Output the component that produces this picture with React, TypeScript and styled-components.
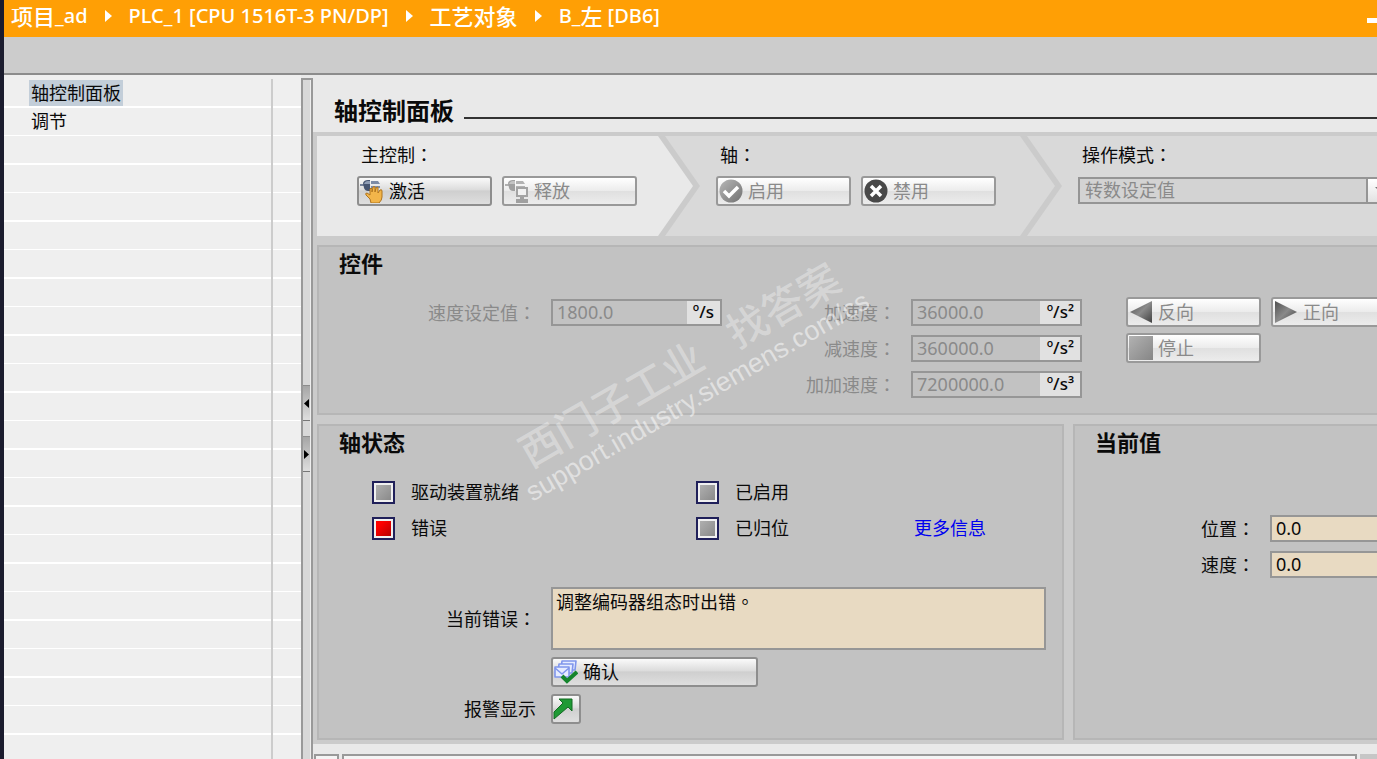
import React from "react";
import styled, { createGlobalStyle } from "styled-components";

const Global = createGlobalStyle`
  * { box-sizing: border-box; }
  html, body, #root { height: 100%; }
  body {
    margin: 0;
    overflow: hidden;
    background: #e9e9e9;
    color: #0a0a0a;
    font: 18px/24px "Noto Sans", "Noto Sans CJK SC", sans-serif;
  }
  button, input, select, textarea { font: inherit; color: inherit; }
  h1, h2, p, ul, ol { margin: 0; padding: 0; list-style: none; }
`;

const Window = styled.div`
  position: relative;
  display: flex;
  flex-direction: column;
  height: 100vh;
  min-height: 759px;
  overflow: hidden;
  border-left: 4px solid #1b1c2e;
`;

const TitleBar = styled.header`
  display: flex;
  flex: none;
  align-items: center;
  height: 37px;
  padding: 0 0 6px 7px;
  background: #ff9f05;
  color: #fff;
  font-size: 20px;
  font-weight: 500;
`;

const Crumbs = styled.ol`
  display: flex;
  flex: 1;
  align-items: center;
  white-space: nowrap;
`;

const Crumb = styled.li`
  display: flex;
  align-items: center;
`;

const Han = styled.span`
  font-size: 22px;
`;

const CrumbArrow = styled.svg`
  width: 7px;
  height: 14px;
  margin: 0 17px;
  fill: #fff;
`;

const Minimize = styled.button`
  width: 12px;
  height: 5px;
  margin: 10px -2px 0 0;
  padding: 0;
  border: 0;
  background: #fff;
`;

const Toolbar = styled.div`
  flex: none;
  height: 38px;
  border-bottom: 2px solid #8c8c8c;
  background: #ccc;
`;

const Body = styled.div`
  display: flex;
  flex: 1;
  min-height: 0;
`;

const Sidebar = styled.nav`
  display: flex;
  flex: none;
  width: 297px;
  padding-top: 4px;
  background: #efefef;
`;

const TreeRows = styled.ul`
  flex: 1;
  padding-left: 25px;
  background: repeating-linear-gradient(
    #efefef 0 27px, #fff 27px 29px, #efefef 29px 56px, #fff 56px 57px
  );
`;

const TreeItem = styled.li`
  height: 28px;
  padding-top: 1px;
`;

const TreeLink = styled.a<{ $active?: boolean }>`
  display: inline-block;
  height: 26px;
  padding: 0 2px;
  line-height: 26px;
  color: #0a0a0a;
  text-decoration: none;
  background: ${(p) => (p.$active ? "#c3ced9" : "transparent")};
`;

const TreeGutter = styled.div`
  width: 30px;
  border-left: 2px solid #ccc;
  background: repeating-linear-gradient(
    #efefef 0 27px, #fff 27px 29px, #efefef 29px 56px, #fff 56px 57px
  );
`;

const Splitter = styled.div`
  display: flex;
  flex: none;
  flex-direction: column;
  align-items: flex-start;
  gap: 15px;
  width: 12px;
  margin-top: 3px;
  padding-top: 305px;
  border: 2px solid #999;
  border-bottom: 0;
  background: linear-gradient(to right, #d8d8d8 0 7px, #eee 7px);
`;

const SplitterButton = styled.button`
  display: flex;
  align-items: center;
  justify-content: center;
  width: 7px;
  height: 36px;
  padding: 0;
  border: 0;
  border-top: 1px solid #8c8c8c;
  border-bottom: 1px solid #777;
  background: linear-gradient(#a6a6a6, #dedede);

  svg { width: 5px; height: 9px; flex: none; }
`;

const Main = styled.main`
  display: flex;
  flex: 1;
  flex-direction: column;
  min-width: 0;
  overflow: hidden;
  background: #e9e9e9;
`;

const PageTitle = styled.div`
  display: flex;
  flex: none;
  align-items: center;
  gap: 10px;
  height: 57px;
  padding: 14px 0 0 21px;

  h1 { font-size: 24px; line-height: 30px; white-space: nowrap; }
`;

const TitleRule = styled.div`
  flex: 1;
  height: 2px;
  margin-top: 14px;
  background: #333;
`;

const Panels = styled.div`
  display: flex;
  flex: none;
  flex-direction: column;
  gap: 9px;
  padding: 4px 0 4px 4px;
  background: #cbcbcb;
`;

const Steps = styled.div`
  display: flex;
  height: 100px;
`;

const Step = styled.section<{ $width?: number; $first?: boolean; $last?: boolean }>`
  flex: ${(p) => (p.$last ? "1 0 0" : "none")};
  width: ${(p) => (p.$width ? `${p.$width}px` : "auto")};
  margin-left: ${(p) => (p.$first ? 0 : "-28px")};
  padding: 6px 0 0 ${(p) => (p.$first ? "40px" : "51px")};
  background: ${(p) => (p.$first ? "#e9e9e9" : "#d9d9d9")};
  clip-path: polygon(
    0 0,
    ${(p) => (p.$last ? "100% 0, 100% 100%" : "calc(100% - 35px) 0, 100% 50%, calc(100% - 35px) 100%")},
    0 100%,
    ${(p) => (p.$first ? "0 50%" : "35px 50%")}
  );
`;

const StepLabel = styled.label`
  display: block;
  width: max-content;
  margin-bottom: 9px;
  padding-left: 4px;
`;

const Punct = styled.span`
  font-family: "Noto Sans CJK TC", sans-serif;
`;

const Row = styled.div`
  display: flex;
  gap: 10px;
`;

const Button = styled.button<{ $width?: number }>`
  display: flex;
  flex: none;
  align-items: center;
  gap: 5px;
  width: ${(p) => p.$width ?? 135}px;
  height: 30px;
  padding: 0 1px 1px;
  border: 2px solid #8e8e8e;
  border-radius: 3px;
  background: linear-gradient(#fafafa, #dcdcdc 45%, #cfcfcf 50%, #dedede);
  color: #0a0a0a;
  white-space: nowrap;

  svg { flex: none; width: 24px; height: 24px; }

  &:disabled {
    border-color: #999;
    background: linear-gradient(#fff, #ececec 48%, #e0e0e0 52%, #ececec);
    color: #8a8a8a;
  }
`;

const IconButton = styled(Button)`
  padding: 0;
`;

const SelectBox = styled.div`
  display: grid;
  width: 320px;
  height: 27px;
  margin-top: 10px;
  border: 2px solid #959595;
  background: #d3d3d3;
`;

const Select = styled.select`
  grid-area: 1 / 1;
  width: 100%;
  height: 23px;
  padding: 0 30px 0 5px;
  border: 0;
  background: transparent;
  color: #8a8a8a;
  line-height: 23px;
  appearance: none;
  opacity: 1;
`;

const SelectArrow = styled.span`
  grid-area: 1 / 1;
  justify-self: end;
  display: flex;
  align-items: center;
  justify-content: center;
  width: 30px;
  border-left: 2px solid #959595;
  background: linear-gradient(#fff, #e2e2e2);
  pointer-events: none;
`;

const Panel = styled.section<{ $width?: number }>`
  flex: ${(p) => (p.$width ? "none" : "1 0 0")};
  width: ${(p) => (p.$width ? `${p.$width}px` : "auto")};
  padding: 1px 0 0 20px;
  border: 2px solid #b6b6b6;
  border-right-width: ${(p) => (p.$width ? "2px" : 0)};
  background: #c2c2c2;

  h2 { font-size: 22px; line-height: 30px; }
`;

const ControlPanel = styled(Panel)`
  flex: none;
  height: 170px;
`;

const ControlGrid = styled.div`
  display: grid;
  grid-template-columns: 197px 171px 159px 171px max-content;
  column-gap: 15px;
  margin-top: 16px;
`;

const Stack = styled.div<{ $indent?: number }>`
  display: flex;
  flex-direction: column;
  padding-left: ${(p) => p.$indent ?? 0}px;
`;

const Line = styled.div`
  display: flex;
  flex: none;
  align-items: center;
  justify-content: flex-end;
  height: 36px;
`;

const ButtonLine = styled(Line)`
  justify-content: flex-start;
  gap: 10px;
`;

const DimLabel = styled.label`
  color: #8a8a8a;
  white-space: nowrap;
`;

const Field = styled.div`
  display: flex;
  width: 171px;
  height: 27px;
  border: 2px solid #969696;
`;

const FieldInput = styled.input`
  flex: 1;
  min-width: 0;
  padding: 0 0 0 4px;
  border: 0;
  background: transparent;
  color: #8a8a8a;
`;

const Unit = styled.span<{ $width: number }>`
  width: ${(p) => p.$width}px;
  padding-right: 6px;
  background: #e1e1e1;
  color: #0a0a0a;
  font-size: 17px;
  font-weight: 500;
  line-height: 22px;
  text-align: right;
`;

const Bottom = styled.div`
  display: flex;
  gap: 9px;
  height: 316px;
`;

const Leds = styled.div`
  display: grid;
  grid-template-columns: 324px 218px max-content;
  grid-auto-rows: 36px;
  align-items: center;
  margin: 17px 0 0 33px;
`;

const LedItem = styled.div`
  display: flex;
  align-items: center;
  gap: 16px;
`;

const Led = styled.span<{ $on?: boolean }>`
  width: 23px;
  height: 23px;
  border: 2px solid #20205a;
  background: ${(p) =>
    p.$on ? "linear-gradient(135deg, #f00 30%, #a00)" : "linear-gradient(135deg, #b4b4b4, #858585)"};
  box-shadow: inset 0 0 0 2px #f0f0f0;
`;

const Link = styled.a`
  grid-column: 3;
  color: #0000f0;
  text-decoration: none;
`;

const ErrorGrid = styled.div`
  display: grid;
  grid-template-columns: 197px max-content;
  column-gap: 15px;
  row-gap: 7px;
  align-items: center;
  justify-items: start;
  margin-top: 41px;
`;

const GridLabel = styled.label`
  justify-self: end;
  white-space: nowrap;
`;

const ErrorText = styled.output`
  display: block;
  width: 495px;
  height: 63px;
  padding: 0 3px;
  border: 2px solid #969696;
  background: #e8dac2;
`;

const ValueGrid = styled.div`
  display: grid;
  grid-template-columns: 160px 1fr;
  column-gap: 15px;
  grid-auto-rows: 36px;
  align-items: center;
  margin-top: 53px;
`;

const ValueInput = styled.input`
  width: 100%;
  height: 27px;
  padding: 0 4px;
  border: 2px solid #969696;
  border-right: 0;
  background: #e8dac2;
`;

const ScrollStrip = styled.div`
  display: flex;
  flex: 1;
  align-items: flex-end;
  gap: 3px;
  padding-left: 1px;
`;

const ScrollPart = styled.div<{ $grow?: boolean }>`
  flex: ${(p) => (p.$grow ? 1 : "none")};
  width: 25px;
  height: 5px;
  border: 2px solid #999;
  border-bottom: 0;
  background: #f4f4f4;
`;

const ScrollCorner = styled.div`
  width: 17px;
  height: 5px;
  background: #c6c6c6;
`;

const Watermark = styled.div`
  position: absolute;
  left: 684px;
  top: 380px;
  transform: translate(-50%, -50%) rotate(-30deg);
  color: rgba(255, 255, 255, 0.5);
  font-family: "Liberation Sans", "Noto Sans CJK SC", sans-serif;
  font-size: 27px;
  line-height: 32px;
  text-align: center;
  white-space: pre;
  pointer-events: none;

  p:first-child {
    color: rgba(255, 255, 255, 0.32);
    font-size: 41px;
    font-weight: 500;
    line-height: 38px;
  }
`;

const Colon = () => <Punct>：</Punct>;

const Arrow = () => (
  <CrumbArrow viewBox="0 0 7 14" aria-hidden="true">
    <path d="M0 1 7 7 0 13z" />
  </CrumbArrow>
);

const Plug = ({ dim }: { dim?: boolean }) => (
  <g>
    <path d="M0 5h4v2H0z" fill={dim ? "#b0b0b0" : "#76839b"} />
    <path d="M3 4Q4 1 8 1h2v11H8Q5 12 4 9z" fill={dim ? "#a0a0a0" : "#465571"} />
    <path d="M4 5Q5 2 8 2h2v3z" fill={dim ? "#c4c4c4" : "#8f9db5"} />
    <path d="M11 2h7l2 3h-9zM11 7h9v2h-9zM11 10h5v2h-5z" fill={dim ? "#b3b3b3" : "#7c8ba6"} />
  </g>
);

const HandIcon = () => (
  <svg viewBox="0 0 24 24" aria-hidden="true">
    <Plug />
    <path
      d="M11 24 10 20 6 16Q5 14 7 14L10 16V10Q11 8 12 10V13L13 8Q14 7 15 8V13L16 9Q18 7 18 9V14L20 11Q22 10 22 12V18Q22 21 19 24Z"
      fill="#f2b54a"
      stroke="#b0741c"
      strokeLinejoin="round"
    />
  </svg>
);

const StationIcon = () => (
  <svg viewBox="0 0 24 24" aria-hidden="true">
    <Plug dim />
    <rect x="12" y="9" width="10" height="8" fill="#f1f1f1" stroke="#a3a3a3" strokeWidth="2" />
    <path d="M15 18h4v2h4v4H11v-4h4z" fill="#a0a0a0" />
  </svg>
);

const CheckIcon = () => (
  <svg viewBox="0 0 24 24" aria-hidden="true">
    <defs>
      <linearGradient id="check" x2="1" y2="1">
        <stop stopColor="#b8b8b8" />
        <stop offset="1" stopColor="#717171" />
      </linearGradient>
    </defs>
    <circle cx="12" cy="12" r="11.5" fill="url(#check)" />
    <path d="m5 12 5 5 9-9" fill="none" stroke="#fff" strokeWidth="3.5" />
  </svg>
);

const CrossIcon = () => (
  <svg viewBox="0 0 24 24" aria-hidden="true">
    <circle cx="12" cy="12" r="11.5" fill="#484848" />
    <path d="m7 7 10 10M17 7 7 17" fill="none" stroke="#fff" strokeWidth="3.5" />
  </svg>
);

const DarkFill = ({ id }: { id: string }) => (
  <defs>
    <linearGradient id={id} x2="1" y2="1">
      <stop stopColor="#505050" />
      <stop offset="0.5" stopColor="#8a8a8a" />
      <stop offset="1" stopColor="#404040" />
    </linearGradient>
  </defs>
);

const BackIcon = () => (
  <svg viewBox="0 0 24 24" aria-hidden="true">
    <DarkFill id="back" />
    <path d="M23 1v22L1 12z" fill="url(#back)" />
  </svg>
);

const ForwardIcon = () => (
  <svg viewBox="0 0 24 24" aria-hidden="true">
    <DarkFill id="forward" />
    <path d="M1 1v22l22-11z" fill="url(#forward)" />
  </svg>
);

const StopIcon = () => (
  <svg viewBox="0 0 24 24" aria-hidden="true">
    <defs>
      <linearGradient id="stop" x2="1" y2="1">
        <stop stopColor="#b2b2b2" />
        <stop offset="1" stopColor="#868686" />
      </linearGradient>
    </defs>
    <path d="M0 0h24v24H0z" fill="url(#stop)" />
  </svg>
);

const AcknowledgeIcon = () => (
  <svg viewBox="0 0 24 24" aria-hidden="true">
    <g fill="#e6ecff" stroke="#8096ec" strokeWidth="1.6" strokeLinejoin="round">
      <path d="M8 1h14l-1 9H7z" />
      <path d="M5 4h14l-1 9H4z" />
      <path d="M1 7h14v10H1z" />
      <path d="m1 8 7 6 7-6" fill="none" />
    </g>
    <path d="m8 16 5 5 10-9" fill="none" stroke="#14852c" strokeWidth="4" />
  </svg>
);

const JumpIcon = () => (
  <svg viewBox="0 0 24 24" aria-hidden="true">
    <path d="M6 2h13v12l-4-4L1 22v-7l9-9z" fill="#1f9a35" stroke="#126a22" />
  </svg>
);

const accelerations = [
  { id: "acc", label: "加速度", value: "36000.0", unit: "º/s²" },
  { id: "dec", label: "减速度", value: "360000.0", unit: "º/s²" },
  { id: "jerk", label: "加加速度", value: "7200000.0", unit: "º/s³" },
];

export default function App() {
  return (
    <Window>
      <Global />
      <TitleBar>
        <Crumbs>
          <Crumb><Han>项目</Han>_ad<Arrow /></Crumb>
          <Crumb>PLC_1 [CPU 1516T-3 PN/DP]<Arrow /></Crumb>
          <Crumb><Han>工艺对象</Han><Arrow /></Crumb>
          <Crumb>B_<Han>左</Han>&nbsp;[DB6]</Crumb>
        </Crumbs>
        <Minimize aria-label="最小化" />
      </TitleBar>
      <Toolbar />
      <Body>
        <Sidebar>
          <TreeRows>
            <TreeItem><TreeLink href="#panel" $active>轴控制面板</TreeLink></TreeItem>
            <TreeItem><TreeLink href="#tuning">调节</TreeLink></TreeItem>
          </TreeRows>
          <TreeGutter />
        </Sidebar>
        <Splitter>
          <SplitterButton aria-label="收起">
            <svg viewBox="0 0 10 18"><path d="M10 0v18L0 9z" /></svg>
          </SplitterButton>
          <SplitterButton aria-label="展开">
            <svg viewBox="0 0 10 18"><path d="M0 0v18l10-9z" /></svg>
          </SplitterButton>
        </Splitter>
        <Main>
          <PageTitle>
            <h1>轴控制面板</h1>
            <TitleRule />
          </PageTitle>
          <Panels>
            <Steps>
              <Step $width={376} $first>
                <StepLabel as="div">主控制<Colon /></StepLabel>
                <Row>
                  <Button><HandIcon />激活</Button>
                  <Button disabled><StationIcon />释放</Button>
                </Row>
              </Step>
              <Step $width={390}>
                <StepLabel as="div">轴<Colon /></StepLabel>
                <Row>
                  <Button disabled><CheckIcon />启用</Button>
                  <Button disabled><CrossIcon />禁用</Button>
                </Row>
              </Step>
              <Step $last>
                <StepLabel htmlFor="mode">操作模式<Colon /></StepLabel>
                <SelectBox>
                  <Select id="mode" disabled><option>转数设定值</option></Select>
                  <SelectArrow>
                    <svg width="14" height="7" viewBox="0 0 14 7"><path d="M0 0h14L7 7z" fill="#777" /></svg>
                  </SelectArrow>
                </SelectBox>
              </Step>
            </Steps>
            <ControlPanel>
              <h2>控件</h2>
              <ControlGrid>
                <Line><DimLabel htmlFor="speed">速度设定值<Colon /></DimLabel></Line>
                <Line>
                  <Field>
                    <FieldInput id="speed" disabled defaultValue="1800.0" />
                    <Unit $width={33}>º/s</Unit>
                  </Field>
                </Line>
                <Stack>
                  {accelerations.map((a) => (
                    <Line key={a.id}><DimLabel htmlFor={a.id}>{a.label}<Colon /></DimLabel></Line>
                  ))}
                </Stack>
                <Stack>
                  {accelerations.map((a) => (
                    <Line key={a.id}>
                      <Field>
                        <FieldInput id={a.id} disabled defaultValue={a.value} />
                        <Unit $width={40}>{a.unit}</Unit>
                      </Field>
                    </Line>
                  ))}
                </Stack>
                <Stack $indent={29}>
                  <ButtonLine>
                    <Button disabled><BackIcon />反向</Button>
                    <Button disabled><ForwardIcon />正向</Button>
                  </ButtonLine>
                  <ButtonLine>
                    <Button disabled><StopIcon />停止</Button>
                  </ButtonLine>
                </Stack>
              </ControlGrid>
            </ControlPanel>
            <Bottom>
              <Panel $width={747}>
                <h2>轴状态</h2>
                <Leds>
                  <LedItem><Led />驱动装置就绪</LedItem>
                  <LedItem><Led />已启用</LedItem>
                  <span />
                  <LedItem><Led $on />错误</LedItem>
                  <LedItem><Led />已归位</LedItem>
                  <Link href="#more">更多信息</Link>
                </Leds>
                <ErrorGrid>
                  <GridLabel htmlFor="error">当前错误<Colon /></GridLabel>
                  <ErrorText id="error">调整编码器组态时出错<Punct>。</Punct></ErrorText>
                  <span />
                  <Button $width={207}><AcknowledgeIcon />确认</Button>
                  <GridLabel htmlFor="alarm">报警显示</GridLabel>
                  <IconButton id="alarm" $width={30}><JumpIcon /></IconButton>
                </ErrorGrid>
              </Panel>
              <Panel>
                <h2>当前值</h2>
                <ValueGrid>
                  <GridLabel htmlFor="position">位置<Colon /></GridLabel>
                  <ValueInput id="position" readOnly defaultValue="0.0" />
                  <GridLabel htmlFor="velocity">速度<Colon /></GridLabel>
                  <ValueInput id="velocity" readOnly defaultValue="0.0" />
                </ValueGrid>
              </Panel>
            </Bottom>
          </Panels>
          <ScrollStrip>
            <ScrollPart />
            <ScrollPart $grow />
            <ScrollCorner />
          </ScrollStrip>
        </Main>
      </Body>
      <Watermark>
        <p>西门子工业   找答案</p>
        <p>support.industry.siemens.com/cs</p>
      </Watermark>
    </Window>
  );
}
